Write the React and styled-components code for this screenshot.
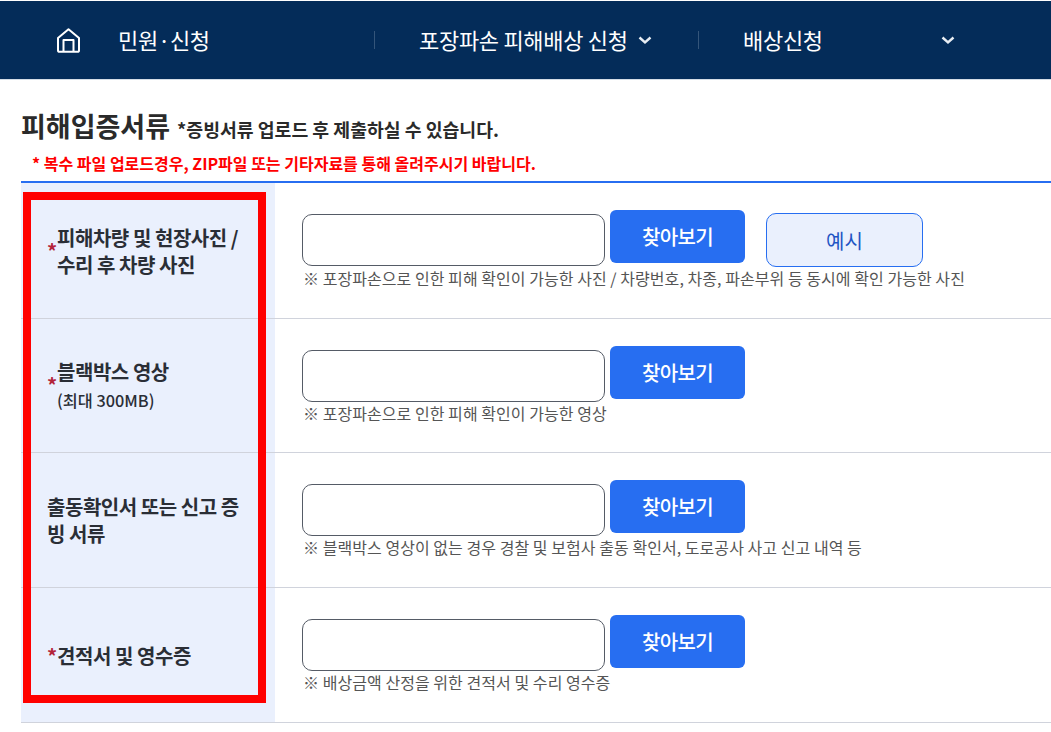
import React from 'react';
import styled, { createGlobalStyle } from 'styled-components';

const GlobalStyle = createGlobalStyle`
  html, body { margin: 0; padding: 0; background: #fff; }
  body {
    font-family: "Noto Sans CJK KR", "Noto Sans", sans-serif;
    color: #222;
    overflow: hidden;
  }
  * { box-sizing: border-box; }
`;

const Page = styled.div`
  position: relative;
  width: 1051px;
  height: 732px;
  overflow: hidden;
  padding-top: 1px;
`;

const Nav = styled.nav`
  display: flex;
  align-items: center;
  height: 79px;
  background: #042c59;
  border-bottom: 1px solid #d5dde6;
  color: #fff;
  font-size: 22px;
  letter-spacing: -0.3px;
`;

const HomeLink = styled.div`
  display: flex;
  align-items: center;
  width: 374px;
  padding-left: 57px;
  gap: 38px;
`;

const NavText = styled.span`
  line-height: 30px;
  margin-top: -3px;
  white-space: nowrap;
`;

const NavSegment = styled.div`
  display: flex;
  align-items: center;
  width: 324px;
  height: 18px;
  padding-left: 44px;
  border-left: 1px solid #34557a;
  gap: ${p => p.$gap}px;
`;

const Content = styled.main`
  padding: 27px 0 0 21px;
`;

const TitleRow = styled.div`
  display: flex;
  align-items: baseline;
  gap: 7px;
  height: 40px;
`;

const Title = styled.h2`
  margin: 0;
  font-size: 27px;
  font-weight: 700;
  line-height: 38px;
  color: #2a2a2a;
`;

const SubTitle = styled.span`
  font-size: 18.3px;
  font-weight: 700;
  color: #2a2a2a;
`;

const Notice = styled.p`
  margin: 0;
  padding-left: 11px;
  height: 34px;
  font-size: 16px;
  font-weight: 700;
  line-height: 32px;
  color: #f00;
`;

const Table = styled.div`
  border-top: 2px solid #276ef1;
`;

const Row = styled.div`
  display: grid;
  grid-template-columns: 254px 1fr;
  height: ${p => p.$height}px;
  border-bottom: 1px solid #d0d3dc;
`;

const LabelCell = styled.div`
  display: flex;
  align-items: center;
  padding: 0 27px 0 26px;
  background: #eaf0fd;
  font-size: 20px;
  font-weight: 700;
  letter-spacing: -0.45px;
  line-height: 27px;
  color: #2a2e36;
  word-break: break-all;
`;

const Star = styled.span`
  flex: none;
  width: 10px;
  color: #b3243a;
  font-size: 20px;
  position: relative;
  top: ${p => p.$top}px;
`;

const SmallNote = styled.span`
  display: block;
  margin-top: 2px;
  font-size: 16.3px;
  font-weight: 500;
  letter-spacing: 0;
`;

const FieldCell = styled.div`
  padding: 27px 0 0 27px;
`;

const Controls = styled.div`
  display: flex;
  align-items: flex-start;
`;

const FileInput = styled.div`
  width: 303px;
  height: 52px;
  margin-top: 4px;
  background: #fff;
  border: 1px solid #555b66;
  border-radius: 10px;
`;

const Browse = styled.button`
  width: 135px;
  height: 53px;
  margin-left: 5px;
  border: 0;
  border-radius: 6px;
  background: #276ef1;
  color: #fff;
  font: 500 20px "Noto Sans CJK KR", sans-serif;
  letter-spacing: -0.6px;
`;

const Example = styled.button`
  width: 157px;
  height: 54px;
  margin: 3px 0 0 21px;
  border: 1px solid #276ef1;
  border-radius: 10px;
  background: #eaf0fd;
  color: #1f55c4;
  font: 400 20px "Noto Sans CJK KR", sans-serif;
`;

const Hint = styled.p`
  margin: 1px 0 0 1px;
  font-size: 16px;
  letter-spacing: 0.05px;
  line-height: 20px;
  color: #555;
  white-space: nowrap;
`;

const Highlight = styled.div`
  position: absolute;
  left: 23px;
  top: 192px;
  width: 243px;
  height: 511px;
  border: 8px solid #f00;
  pointer-events: none;
`;

const Chevron = () => (
  <svg width="14" height="14" viewBox="0 0 14 14" fill="none" stroke="#e8edf3" strokeWidth="2.4">
    <path d="M1.5 4.5 7 9.5 12.5 4.5" />
  </svg>
);

const HomeIcon = () => (
  <svg width="23" height="25" viewBox="0 0 23 25" fill="none" stroke="#fff" strokeWidth="2" strokeLinejoin="round">
    <path d="M1 10 11.5 1.2 22 10V22.5a1.3 1.3 0 0 1-1.3 1.3H2.3A1.3 1.3 0 0 1 1 22.5Z" />
    <path d="M6.5 23.8V12h10v11.8" />
  </svg>
);

const rows = [
  {
    height: 136,
    star: 0,
    label: <>피해차량 및 현장사진 /<br />수리 후 차량 사진</>,
    hint: '※ 포장파손으로 인한 피해 확인이 가능한 사진 / 차량번호, 차종, 파손부위 등 동시에 확인 가능한 사진',
    example: true,
  },
  {
    height: 134,
    star: -1,
    label: '블랙박스 영상',
    note: '(최대 300MB)',
    hint: '※ 포장파손으로 인한 피해 확인이 가능한 영상',
  },
  {
    height: 135,
    label: '출동확인서 또는 신고 증빙 서류',
    hint: '※ 블랙박스 영상이 없는 경우 경찰 및 보험사 출동 확인서, 도로공사 사고 신고 내역 등',
  },
  {
    height: 135,
    star: 0,
    label: '견적서 및 영수증',
    hint: '※ 배상금액 산정을 위한 견적서 및 수리 영수증',
  },
];

const App = () => (
  <Page>
    <GlobalStyle />
    <Nav>
      <HomeLink>
        <HomeIcon />
        <NavText>민원·신청</NavText>
      </HomeLink>
      <NavSegment $gap={10}>
        <NavText>포장파손 피해배상 신청</NavText>
        <Chevron />
      </NavSegment>
      <NavSegment $gap={118}>
        <NavText>배상신청</NavText>
        <Chevron />
      </NavSegment>
    </Nav>
    <Content>
      <TitleRow>
        <Title>피해입증서류</Title>
        <SubTitle>*증빙서류 업로드 후 제출하실 수 있습니다.</SubTitle>
      </TitleRow>
      <Notice>* 복수 파일 업로드경우, ZIP파일 또는 기타자료를 통해 올려주시기 바랍니다.</Notice>
      <Table>
        {rows.map(row => (
          <Row key={row.hint} $height={row.height}>
            <LabelCell>
              {row.star !== undefined && <Star $top={row.star}>*</Star>}
              <div>
                {row.label}
                {row.note && <SmallNote>{row.note}</SmallNote>}
              </div>
            </LabelCell>
            <FieldCell>
              <Controls>
                <FileInput />
                <Browse>찾아보기</Browse>
                {row.example && <Example>예시</Example>}
              </Controls>
              <Hint>{row.hint}</Hint>
            </FieldCell>
          </Row>
        ))}
      </Table>
    </Content>
    <Highlight />
  </Page>
);

export default App;
